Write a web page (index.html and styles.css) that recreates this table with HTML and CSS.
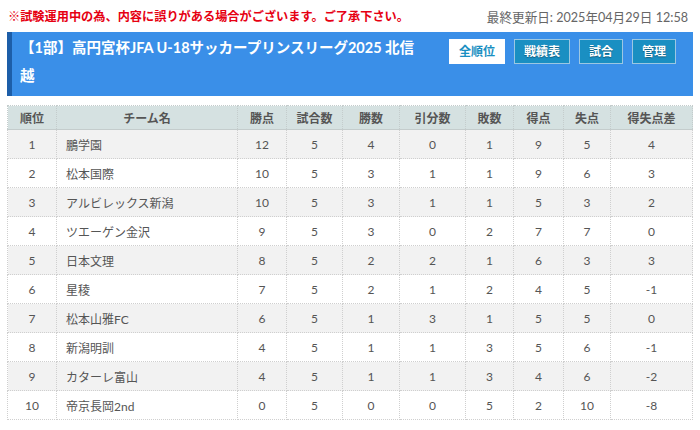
FILE: index.html
```html
<!DOCTYPE html>
<html lang="ja">
<head>
  <meta charset="UTF-8">
  <meta name="viewport" content="width=device-width, initial-scale=1.0">
  <title>順位表</title>
  <link rel="stylesheet" href="styles.css">
</head>
<body>
  <div class="page">
    <div class="topbar">
      <span class="notice">※試験運用中の為、内容に誤りがある場合がございます。ご了承下さい。</span>
      <span class="updated">最終更新日: 2025年04月29日 12:58</span>
    </div>

    <div class="league-head">
      <h1 class="league-title">【1部】高円宮杯JFA U-18サッカープリンスリーグ2025 北信越</h1>
      <div class="menu">
        <a class="menu-btn active">全順位</a>
        <a class="menu-btn">戦績表</a>
        <a class="menu-btn">試合</a>
        <a class="menu-btn">管理</a>
      </div>
    </div>

    <table class="standings">
      <colgroup>
        <col style="width:49px">
        <col style="width:181px">
        <col style="width:49px">
        <col style="width:56px">
        <col style="width:57px">
        <col style="width:66px">
        <col style="width:48px">
        <col style="width:50px">
        <col style="width:47px">
        <col>
      </colgroup>
      <thead>
        <tr>
          <th>順位</th><th>チーム名</th><th>勝点</th><th>試合数</th><th>勝数</th>
          <th>引分数</th><th>敗数</th><th>得点</th><th>失点</th><th>得失点差</th>
        </tr>
      </thead>
      <tbody>
        <tr><td>1</td><td class="team">鵬学園</td><td>12</td><td>5</td><td>4</td><td>0</td><td>1</td><td>9</td><td>5</td><td>4</td></tr>
        <tr><td>2</td><td class="team">松本国際</td><td>10</td><td>5</td><td>3</td><td>1</td><td>1</td><td>9</td><td>6</td><td>3</td></tr>
        <tr><td>3</td><td class="team">アルビレックス新潟</td><td>10</td><td>5</td><td>3</td><td>1</td><td>1</td><td>5</td><td>3</td><td>2</td></tr>
        <tr><td>4</td><td class="team">ツエーゲン金沢</td><td>9</td><td>5</td><td>3</td><td>0</td><td>2</td><td>7</td><td>7</td><td>0</td></tr>
        <tr><td>5</td><td class="team">日本文理</td><td>8</td><td>5</td><td>2</td><td>2</td><td>1</td><td>6</td><td>3</td><td>3</td></tr>
        <tr><td>6</td><td class="team">星稜</td><td>7</td><td>5</td><td>2</td><td>1</td><td>2</td><td>4</td><td>5</td><td>-1</td></tr>
        <tr><td>7</td><td class="team">松本山雅FC</td><td>6</td><td>5</td><td>1</td><td>3</td><td>1</td><td>5</td><td>5</td><td>0</td></tr>
        <tr><td>8</td><td class="team">新潟明訓</td><td>4</td><td>5</td><td>1</td><td>1</td><td>3</td><td>5</td><td>6</td><td>-1</td></tr>
        <tr><td>9</td><td class="team">カターレ富山</td><td>4</td><td>5</td><td>1</td><td>1</td><td>3</td><td>4</td><td>6</td><td>-2</td></tr>
        <tr><td>10</td><td class="team">帝京長岡2nd</td><td>0</td><td>5</td><td>0</td><td>0</td><td>5</td><td>2</td><td>10</td><td>-8</td></tr>
      </tbody>
    </table>
  </div>
</body>
</html>
```

FILE: styles.css
```css
body {
  margin: 0;
  font-family: Lato, "Noto Sans CJK JP", sans-serif;
  background-color: #fff;
  color: #555;
}
.page {
  padding: 0 7px;
}
.topbar {
  display: flex;
  justify-content: space-between;
  align-items: center;
  height: 32px;
  padding: 0 5px 0 1px;
}
.notice {
  color: #e60012;
  font-size: 12.2px;
  font-weight: bold;
}
.updated {
  color: #666;
  font-size: 12.6px;
}
.league-head {
  display: flex;
  justify-content: space-between;
  align-items: flex-start;
  background-color: #3a8fe8;
  border-left: 5px solid #1d5ea8;
  padding: 2px 17px 6px 8px;
}
.league-title {
  margin: 0;
  width: 400px;
  color: #fff;
  font-size: 14.5px;
  font-weight: bold;
  line-height: 28px;
}
.menu {
  display: flex;
  gap: 9px;
  margin-top: 5px;
}
.menu-btn {
  display: block;
  height: 23px;
  line-height: 23px;
  padding: 0 9px;
  font-size: 12px;
  font-weight: bold;
  color: #fff;
  background-color: #1a8fc2;
  border: 1px solid #9cc7e2;
  text-shadow: 0 1px 1px rgba(0, 0, 0, 0.35);
  cursor: pointer;
}
.menu-btn.active {
  background-color: #fff;
  color: #1a8fc2;
  border-color: #fff;
  text-shadow: none;
}
.standings {
  width: 100%;
  margin-top: 9px;
  border-collapse: collapse;
  table-layout: fixed;
  font-size: 12px;
}
.standings th {
  height: 23px;
  background-color: #d5e1e1;
  color: #555;
  font-weight: bold;
  border: 1px dotted #c4cccc;
  border-bottom: 1px solid #c4cccc;
  padding: 0;
}
.standings td {
  height: 28px;
  padding: 0;
  text-align: center;
  border: 1px dotted #cfcfcf;
}
.standings tbody tr:nth-child(odd) {
  background-color: #f2f2f2;
}
.standings td.team {
  text-align: left;
  padding-left: 9px;
}
```
